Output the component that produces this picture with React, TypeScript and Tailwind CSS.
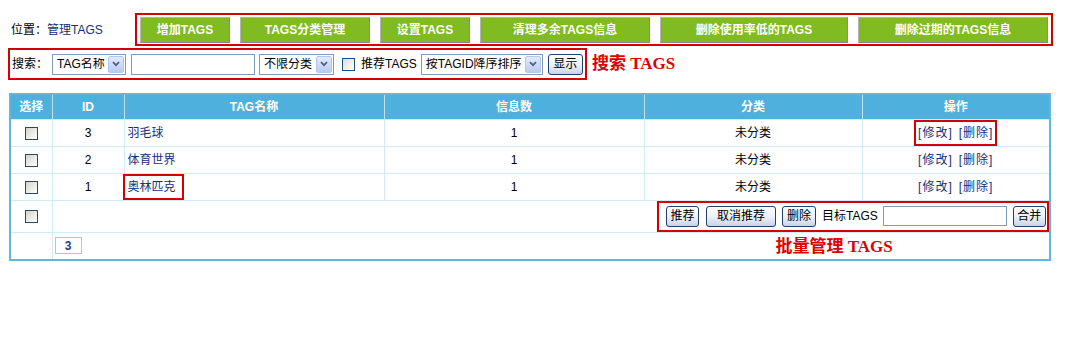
import React from "react";

const FONT = "font-['Liberation_Sans','Noto_Sans_CJK_SC',sans-serif]";

const topButtons = [
  { label: "增加TAGS", w: "w-[90px]" },
  { label: "TAGS分类管理", w: "w-[130px]" },
  { label: "设置TAGS", w: "w-[90px]" },
  { label: "清理多余TAGS信息", w: "w-[170px]" },
  { label: "删除使用率低的TAGS", w: "w-[188px]" },
  { label: "删除过期的TAGS信息", w: "w-[190px]" },
];

const rows = [
  { id: 3, name: "羽毛球" },
  { id: 2, name: "体育世界" },
  { id: 1, name: "奥林匹克" },
];

function Chevron() {
  return (
    <svg width="8" height="6" viewBox="0 0 8 6">
      <path d="M1 1.2 L4 4.2 L7 1.2" fill="none" stroke="#4d6185" strokeWidth="1.8" />
    </svg>
  );
}

function Select({ label, className }: { label: string; className: string }) {
  return (
    <div className={`flex h-[21px] items-center border border-[#7f9db9] bg-white ${className}`}>
      <span className="flex-1 truncate pl-[4px] leading-none">{label}</span>
      <span className="mr-[1px] flex h-[17px] w-[16px] items-center justify-center rounded-[2px] border border-[#b3c6ee] bg-gradient-to-b from-[#e3ebfd] to-[#b9cbf3]">
        <Chevron />
      </span>
    </div>
  );
}

function XpButton({ label, className = "" }: { label: string; className?: string }) {
  return (
    <button
      className={`flex h-[21px] shrink-0 items-center justify-center whitespace-nowrap rounded-[3px] border border-[#1f3f6e] bg-gradient-to-b from-white via-[#eef1f8] to-[#c9d3e8] px-0 leading-none text-black ${className}`}
    >
      {label}
    </button>
  );
}

function Checkbox() {
  return (
    <span className="inline-block h-[13px] w-[13px] border border-[#33475f] bg-gradient-to-br from-[#d4d4cc] to-white align-middle" />
  );
}

const cell = "border border-[#d3eaf7] p-0";

export default function App() {
  return (
    <div className={`min-h-[362px] w-[1068px] bg-white text-[12px] text-black ${FONT}`}>
      {/* top bar */}
      <div className="flex items-start pl-[11px] pt-[13px]">
        <div className="flex h-[33px] w-[124px] items-center">
          位置：<span className="text-[#14307a]">管理TAGS</span>
        </div>
        <div className="flex h-[33px] w-[918px] items-center gap-[10px] border-2 border-[#d40000] pl-[3px]">
          {topButtons.map((b) => (
            <div
              key={b.label}
              className={`flex h-[26px] items-center justify-center border border-[#b4b4b4] border-b-[#8a8a8a] border-r-[#8a8a8a] bg-[#80bb22] font-bold text-white ${b.w}`}
            >
              {b.label}
            </div>
          ))}
        </div>
      </div>

      {/* search */}
      <div className="ml-[8px] mt-[2px] flex items-center">
        <div className="flex h-[32px] w-[579px] items-center border-2 border-[#d40000] pl-[2px]">
          <span className="w-[40px]">搜索：</span>
          <Select label="TAG名称" className="w-[74px]" />
          <div className="ml-[5px] h-[21px] w-[124px] border border-[#7f9db9] bg-white" />
          <Select label="不限分类" className="ml-[4px] w-[75px]" />
          <span className="ml-[8px] inline-block h-[13px] w-[13px] border border-[#1c5180] bg-gradient-to-br from-[#dcdcd7] to-white" />
          <span className="ml-[6px]">推荐TAGS</span>
          <Select label="按TAGID降序排序" className="ml-[4px] w-[122px]" />
          <XpButton label="显示" className="ml-[5px] w-[35px]" />
        </div>
        <span className="ml-[5px] font-['Liberation_Serif','Noto_Sans_CJK_SC',serif] text-[17px] font-bold text-[#e00000]">
          搜索 TAGS
        </span>
      </div>

      {/* table */}
      <div className="ml-[9px] mt-[13px] w-[1042px] border-2 border-[#62b6df]">
        <table className="w-[1038px] table-fixed border-collapse border-hidden">
          <colgroup>
            <col className="w-[41px]" />
            <col className="w-[72px]" />
            <col className="w-[260px]" />
            <col className="w-[260px]" />
            <col className="w-[218px]" />
            <col className="w-[187px]" />
          </colgroup>
          <thead>
            <tr className="h-[24px] bg-[#4eb1dd] font-bold text-white">
              {["选择", "ID", "TAG名称", "信息数", "分类", "操作"].map((h) => (
                <th key={h} className="border-x border-[#bfe2f4] p-0 text-center font-bold">
                  {h}
                </th>
              ))}
            </tr>
          </thead>
          <tbody>
            {rows.map((r, i) => (
              <tr key={r.id} className="h-[27px]">
                <td className={`${cell} text-center`}>
                  <Checkbox />
                </td>
                <td className={`${cell} text-center`}>{r.id}</td>
                <td className={`${cell} pl-[3px] text-[#14307a]`}>
                  {i === 2 ? (
                    <span className="-ml-[5px] inline-block border-2 border-[#d40000] py-[2px] pl-[3px] pr-[6px]">
                      {r.name}
                    </span>
                  ) : (
                    r.name
                  )}
                </td>
                <td className={`${cell} text-center`}>1</td>
                <td className={`${cell} text-center`}>未分类</td>
                <td className={`${cell} text-center text-[#14307a]`}>
                  <span
                    className={`inline-flex gap-[6px] px-[2px] py-[2px] tracking-[1px] ${
                      i === 0 ? "border-2 border-[#d40000]" : "border-2 border-transparent"
                    }`}
                  >
                    <span>[修改]</span>
                    <span>[删除]</span>
                  </span>
                </td>
              </tr>
            ))}
            <tr className="h-[30px]">
              <td className={`${cell} text-center`}>
                <Checkbox />
              </td>
              <td colSpan={5} className={cell}>
                <div className="flex justify-end">
                  <div className="flex h-[31px] w-[392px] items-center border-2 border-[#d40000] pl-[7px]">
                    <XpButton label="推荐" className="h-[20px] w-[33px]" />
                    <XpButton label="取消推荐" className="ml-[7px] h-[20px] w-[70px]" />
                    <XpButton label="删除" className="ml-[6px] h-[20px] w-[34px]" />
                    <span className="ml-[6px] whitespace-nowrap">目标TAGS</span>
                    <div className="ml-[5px] h-[20px] w-[124px] shrink-0 border border-[#7f9db9] bg-white" />
                    <XpButton label="合并" className="ml-[6px] h-[20px] w-[33px]" />
                  </div>
                </div>
              </td>
            </tr>
            <tr className="h-[26px]">
              <td className={cell} />
              <td colSpan={5} className={cell}>
                <div className="relative flex h-[26px] items-center pl-[2px]">
                  <span className="flex h-[17px] w-[27px] items-center justify-center border border-[#a9c8dc] font-bold text-[#1e3c8c]">
                    3
                  </span>
                  <span className="absolute left-[723px] top-[1px] font-['Liberation_Serif','Noto_Sans_CJK_SC',serif] text-[17px] font-bold text-[#e00000]">
                    批量管理 TAGS
                  </span>
                </div>
              </td>
            </tr>
          </tbody>
        </table>
      </div>
    </div>
  );
}
